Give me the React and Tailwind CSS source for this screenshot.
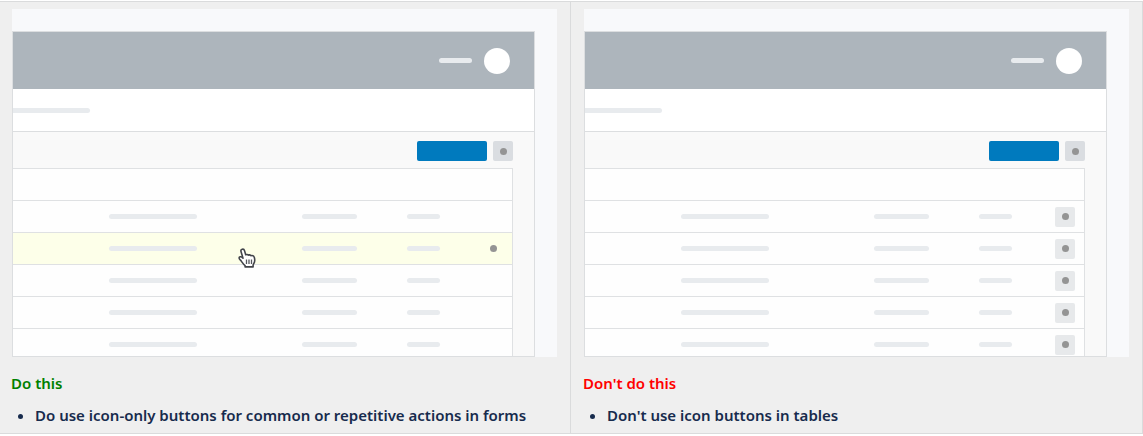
import clsx from "clsx";

const ROWS = [0, 1, 2, 3, 4];

function Pill({ className }) {
  return <div className={clsx("h-[5px] rounded-full bg-[#e8ebee]", className)} />;
}

function DotButton({ label, className }) {
  return (
    <button
      type="button"
      aria-label={label}
      className={clsx("flex size-5 items-center justify-center rounded-xs", className)}
    >
      <span className="size-[7px] rounded-full bg-[#949494]" />
    </button>
  );
}

function HandCursor() {
  return (
    <svg viewBox="0 0 18 21" className="h-[21px] w-[18px]" aria-hidden="true">
      <path
        d="M4.2 1.2C5.3.9 6.2 1.5 6.5 2.6L7.7 6.8C8.5 6.2 9.7 6.4 10.2 7.2C11.1 6.6 12.3 6.8 12.8 7.7C14.4 7.2 15.8 7.7 16.2 9C16.8 10.8 17 12.4 16.4 14.2C15.9 15.6 15.2 16 15.1 17.2V18.9H7.1V17.6C5.3 16.3 4.4 14.6 3.3 13.1C2.6 12.1 1 11.3 1.1 9.9C1.2 8.7 3 8.5 3.9 9.2L5 10.2L3 3.4C2.7 2.3 3.1 1.5 4.2 1.2Z"
        fill="#fff"
        stroke="#42444a"
        strokeWidth="1.6"
        strokeLinejoin="round"
      />
      <path d="M8.5 11.5V16M11 11.5V16M13.5 11.5V16" stroke="#55575c" strokeWidth="1.3" />
    </svg>
  );
}

function Mockup({ hoverRow }) {
  const hasHover = hoverRow !== undefined;
  return (
    <div className="mx-[13px] bg-[#f8f9fb] pt-[22px]">
      <div className="mr-[22px] flex h-[326px] flex-col overflow-hidden border border-[#dcdee0] bg-[#f9f9f9]">
        <div className="flex h-[57px] shrink-0 items-center justify-end gap-3 bg-[#adb5bc] pr-6">
          <Pill className="w-[33px]" />
          <div className="size-[26px] rounded-full bg-white" />
        </div>
        <div className="flex h-[43px] shrink-0 items-center border-b border-[#dcdee0] bg-white">
          <Pill className="w-[77px] rounded-l-none" />
        </div>
        <div className="flex h-9 shrink-0 items-start justify-end gap-1.5 pt-[9px] pr-[21px]">
          <button
            type="button"
            aria-label="Primary action"
            className="h-5 w-[70px] rounded-xs bg-[#007abe]"
          />
          <DotButton label="More actions" className="bg-[#dadde1]" />
        </div>
        <div className="mr-[21px] grow border-t border-r border-[#dfe1e3] bg-[#fefefe]">
          <table className="w-full table-fixed border-separate border-spacing-0" aria-label="Records">
            <colgroup>
              <col />
              <col className="w-[193px]" />
              <col className="w-[105px]" />
              <col className="w-[76px]" />
              <col className="w-[29px]" />
            </colgroup>
            <thead>
              <tr>
                <td colSpan={5} className="h-8 border-b border-[#dfe1e3] p-0" />
              </tr>
            </thead>
            <tbody className="[&_td]:h-8 [&_td]:border-b [&_td]:border-[#dfe1e3] [&_td]:p-0">
              {ROWS.map((row) => {
                const hovered = row === hoverRow;
                return (
                  <tr key={row} className={clsx(hovered && "bg-[#fdffe9]")}>
                    <td />
                    <td>
                      <Pill className="w-[88px]" />
                    </td>
                    <td>
                      <Pill className="w-[55px]" />
                    </td>
                    <td>
                      <Pill className="w-[33px]" />
                    </td>
                    <td>
                      {(hovered || !hasHover) && (
                        <DotButton
                          label={`Row ${row + 1} actions`}
                          className={clsx(!hovered && "bg-[#e7e9eb]")}
                        />
                      )}
                    </td>
                  </tr>
                );
              })}
            </tbody>
          </table>
        </div>
      </div>
    </div>
  );
}

function Example({ title, titleClass, text, hoverRow }) {
  return (
    <section className="min-w-0 flex-1 bg-[#efefef] pt-[7px] pb-1.5">
      <div className="relative">
        <Mockup hoverRow={hoverRow} />
        {hoverRow !== undefined && (
          <div className="absolute top-[239px] left-[239px]">
            <HandCursor />
          </div>
        )}
      </div>
      <div className="px-3 pt-3.5">
        <h2 className={titleClass}>{title}</h2>
        <ul className="mt-2 list-disc pl-6">
          <li>{text}</li>
        </ul>
      </div>
    </section>
  );
}

export default function App() {
  return (
    <main className="bg-white pt-px font-['Noto_Sans',sans-serif] text-[15px] leading-6 font-semibold text-[#172b4d]">
      <div className="-ml-0.5 flex border border-[#dadbdc]">
        <Example
          title="Do this"
          titleClass="text-[#008000]"
          text="Do use icon-only buttons for common or repetitive actions in forms"
          hoverRow={1}
        />
        <div className="w-px bg-[#dadbdc]" />
        <Example
          title="Don't do this"
          titleClass="text-[#ff0000]"
          text="Don't use icon buttons in tables"
        />
      </div>
    </main>
  );
}
